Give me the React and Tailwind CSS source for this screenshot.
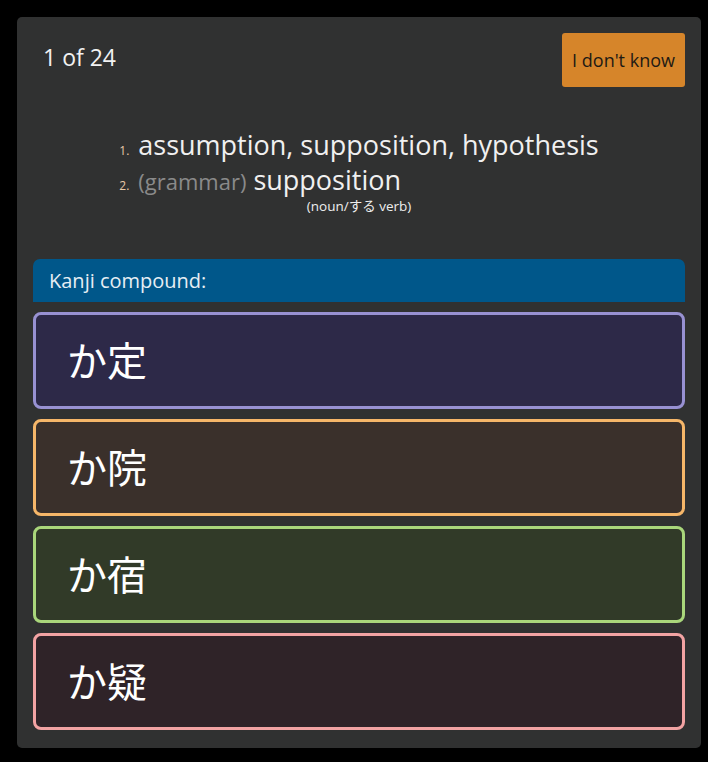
import React from 'react';

const OPTIONS = [
    { text: 'か定', border: 'border-[#9891d2]', bg: 'bg-[#2d2948]' },
    { text: 'か院', border: 'border-[#f5b669]', bg: 'bg-[#3a302b]' },
    { text: 'か宿', border: 'border-[#a9d67b]', bg: 'bg-[#313a28]' },
    { text: 'か疑', border: 'border-[#f2a3a3]', bg: 'bg-[#2f2328]' },
];

const App = () => {
    return (
        <div className="min-h-[762px] w-[708px] bg-black pt-[17px] pl-[17px] font-['Open_Sans','Noto_Sans_CJK_JP',sans-serif]">
            <div className="w-[684px] rounded-[5px] bg-[#303131] px-4 pt-4 pb-[18px]">
                {/* Top row */}
                <div className="flex items-start justify-between">
                    <div className="pl-[10px] pt-[9px] text-[23px] leading-[30px] text-[#f2f2f2]">1 of 24</div>
                    <button className="h-[54px] rounded-[3px] bg-[#d6852a] px-[10px] text-[18px] text-[#1e1a14]">
                        I don't know
                    </button>
                </div>

                {/* Meanings */}
                <div className="mt-[40px] flex flex-col items-center">
                    <ol className="text-left">
                        <li className="h-[35px] text-[27px] leading-[35px] text-[#f0f0f0]">
                            <span className="inline-block w-[19px] text-[12px] leading-none text-[#e8c9a8]">1.</span>
                            assumption, supposition, hypothesis
                        </li>
                        <li className="h-[35px] text-[27px] leading-[35px] text-[#f0f0f0]">
                            <span className="inline-block w-[19px] text-[12px] leading-none text-[#e8c9a8]">2.</span>
                            <span className="text-[22px] leading-none text-[#8a8a8a]">(grammar)</span> supposition
                        </li>
                    </ol>
                    <div className="mt-[1px] text-[13.5px] leading-[16px] text-[#eeeeee]">(noun/する verb)</div>
                </div>

                {/* Question */}
                <div className="mt-[45px] flex h-[43px] items-center rounded-t-[7px] bg-[#00578a] px-4 text-[20px] text-[#e6eef4]">
                    Kanji compound:
                </div>

                <div className="mt-[10px] flex flex-col gap-[10px]">
                    {OPTIONS.map((o) => (
                        <div
                            key={o.text}
                            className={`flex h-[97px] items-center rounded-[8px] border-[3px] pl-[31px] text-[40px] text-white ${o.border} ${o.bg}`}
                        >
                            {o.text}
                        </div>
                    ))}
                </div>
            </div>
        </div>
    );
};

export default App;
